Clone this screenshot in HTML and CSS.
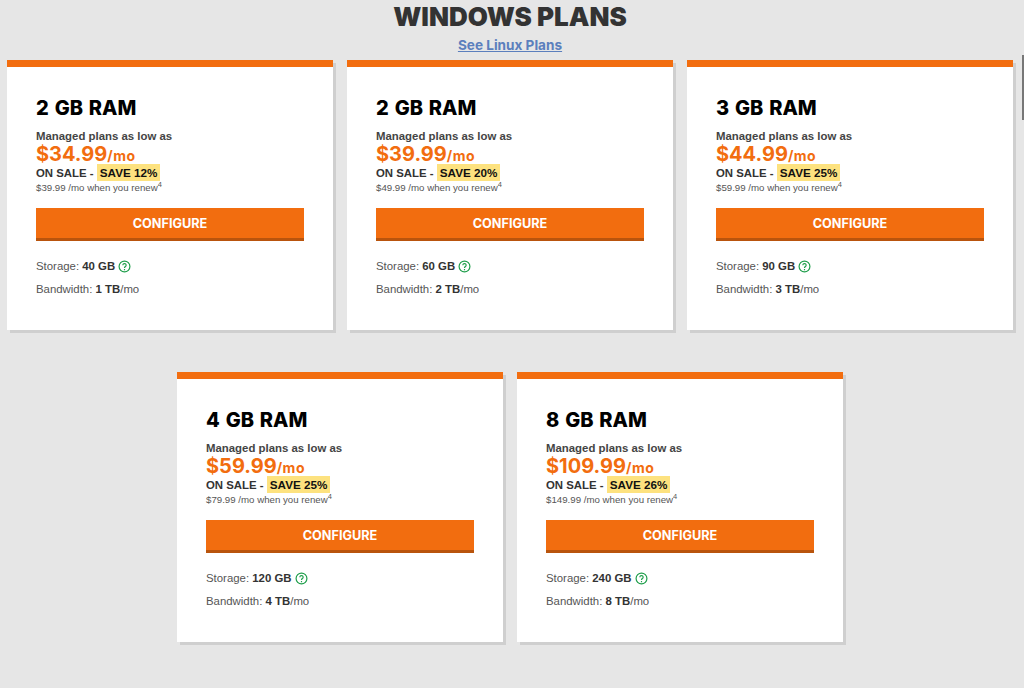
FILE: index.html
```html
<!DOCTYPE html>
<html lang="en">
<head>
<meta charset="utf-8">
<title>Windows Plans</title>
<link rel="stylesheet" href="styles.css">
</head>
<body>
<header class="head">
  <h1 class="title">WINDOWS PLANS</h1>
  <a class="switch" href="#">See Linux Plans</a>
</header>
<main class="plans">
  <article class="card">
    <h2 class="ram">2 GB RAM</h2>
    <p class="lead">Managed plans as low as</p>
    <p class="price"><span class="amount">$34.99</span><span class="per">/mo</span></p>
    <p class="sale">ON SALE - <mark class="save">SAVE 12%</mark></p>
    <p class="renew">$39.99 /mo when you renew<sup>4</sup></p>
    <a class="cta" href="#">CONFIGURE</a>
    <p class="spec">Storage: <b>40 GB</b> <svg class="help" viewBox="0 0 12 12"><circle cx="6" cy="6" r="5" /><path d="M4.5 4.8a1.5 1.5 0 1 1 2.3 1.3c-.6.4-.8.6-.8 1.2M6 8.4v1" /></svg></p>
    <p class="spec">Bandwidth: <b>1 TB</b>/mo</p>
  </article>
  <article class="card">
    <h2 class="ram">2 GB RAM</h2>
    <p class="lead">Managed plans as low as</p>
    <p class="price"><span class="amount">$39.99</span><span class="per">/mo</span></p>
    <p class="sale">ON SALE - <mark class="save">SAVE 20%</mark></p>
    <p class="renew">$49.99 /mo when you renew<sup>4</sup></p>
    <a class="cta" href="#">CONFIGURE</a>
    <p class="spec">Storage: <b>60 GB</b> <svg class="help" viewBox="0 0 12 12"><circle cx="6" cy="6" r="5" /><path d="M4.5 4.8a1.5 1.5 0 1 1 2.3 1.3c-.6.4-.8.6-.8 1.2M6 8.4v1" /></svg></p>
    <p class="spec">Bandwidth: <b>2 TB</b>/mo</p>
  </article>
  <article class="card">
    <h2 class="ram">3 GB RAM</h2>
    <p class="lead">Managed plans as low as</p>
    <p class="price"><span class="amount">$44.99</span><span class="per">/mo</span></p>
    <p class="sale">ON SALE - <mark class="save">SAVE 25%</mark></p>
    <p class="renew">$59.99 /mo when you renew<sup>4</sup></p>
    <a class="cta" href="#">CONFIGURE</a>
    <p class="spec">Storage: <b>90 GB</b> <svg class="help" viewBox="0 0 12 12"><circle cx="6" cy="6" r="5" /><path d="M4.5 4.8a1.5 1.5 0 1 1 2.3 1.3c-.6.4-.8.6-.8 1.2M6 8.4v1" /></svg></p>
    <p class="spec">Bandwidth: <b>3 TB</b>/mo</p>
  </article>
  <article class="card">
    <h2 class="ram">4 GB RAM</h2>
    <p class="lead">Managed plans as low as</p>
    <p class="price"><span class="amount">$59.99</span><span class="per">/mo</span></p>
    <p class="sale">ON SALE - <mark class="save">SAVE 25%</mark></p>
    <p class="renew">$79.99 /mo when you renew<sup>4</sup></p>
    <a class="cta" href="#">CONFIGURE</a>
    <p class="spec">Storage: <b>120 GB</b> <svg class="help" viewBox="0 0 12 12"><circle cx="6" cy="6" r="5" /><path d="M4.5 4.8a1.5 1.5 0 1 1 2.3 1.3c-.6.4-.8.6-.8 1.2M6 8.4v1" /></svg></p>
    <p class="spec">Bandwidth: <b>4 TB</b>/mo</p>
  </article>
  <article class="card">
    <h2 class="ram">8 GB RAM</h2>
    <p class="lead">Managed plans as low as</p>
    <p class="price"><span class="amount">$109.99</span><span class="per">/mo</span></p>
    <p class="sale">ON SALE - <mark class="save">SAVE 26%</mark></p>
    <p class="renew">$149.99 /mo when you renew<sup>4</sup></p>
    <a class="cta" href="#">CONFIGURE</a>
    <p class="spec">Storage: <b>240 GB</b> <svg class="help" viewBox="0 0 12 12"><circle cx="6" cy="6" r="5" /><path d="M4.5 4.8a1.5 1.5 0 1 1 2.3 1.3c-.6.4-.8.6-.8 1.2M6 8.4v1" /></svg></p>
    <p class="spec">Bandwidth: <b>8 TB</b>/mo</p>
  </article>
</main>
<div class="scrollbar"></div>
</body>
</html>
```
FILE: styles.css
```css
* { box-sizing: border-box; }
html, body { height: 100%; }
body {
  margin: 0;
  background: #e6e6e6;
  font-family: "Liberation Sans", Arial, sans-serif;
  color: #333;
  overflow: hidden;
}
p { margin: 0; }
.head {
  width: 1020px;
  text-align: center;
  height: 60px;
  padding-top: 2px;
}
.title {
  margin: 0;
  font-family: Inter, sans-serif;
  font-weight: 900;
  font-size: 26px;
  line-height: 29px;
  color: #333;
}
.switch {
  display: block;
  margin-top: 6px;
  font-family: Inter, sans-serif;
  font-weight: 700;
  font-size: 13.6px;
  line-height: 16px;
  color: #5b7fbd;
  text-decoration: underline;
}
.plans {
  width: 1020px;
  display: flex;
  flex-wrap: wrap;
  justify-content: center;
  gap: 42px 14px;
}
.card {
  width: 326px;
  height: 270px;
  background: #fff;
  border-top: 7px solid #f26d0f;
  padding: 30px 29px 0;
  box-shadow: 3px 3px 0 #cfcfcf;
}
.ram {
  margin: 0;
  font-family: Inter, sans-serif;
  font-weight: 800;
  font-size: 20px;
  line-height: 23px;
  word-spacing: 1.5px;
  color: #000;
}
.lead {
  margin-top: 9px;
  font-size: 11.4px;
  line-height: 14px;
  font-weight: 700;
  color: #444;
}
.price {
  margin-top: 1px;
  height: 20px;
  line-height: 20px;
  color: #f26d0f;
  font-family: Inter, sans-serif;
  font-weight: 700;
}
.amount { font-size: 20px; }
.per { font-size: 14px; letter-spacing: 0.5px; }
.sale {
  margin-top: 2px;
  font-size: 11.4px;
  line-height: 14px;
  font-weight: 700;
  color: #333;
}
.save {
  background: #fde27f;
  color: #111;
  padding: 2px 3px;
  font-size: 11.7px;
}
.renew {
  margin-top: 1px;
  font-size: 9.7px;
  line-height: 14px;
  color: #555;
}
.renew sup {
  font-size: 7.5px;
  line-height: 0;
}
.cta {
  display: block;
  margin-top: 13px;
  height: 33px;
  background: #f26d0f;
  border-bottom: 3px solid #b9540d;
  color: #fff;
  font-family: Inter, sans-serif;
  font-weight: 700;
  font-size: 12.7px;
  line-height: 32px;
  text-align: center;
  text-decoration: none;
}
.spec {
  font-size: 11.4px;
  line-height: 14px;
  color: #555;
  margin-top: 9px;
}
.cta + .spec { margin-top: 18px; }
.spec b { color: #333; }
.help {
  width: 13px;
  height: 13px;
  vertical-align: -3px;
  fill: none;
  stroke: #1e9e4a;
  stroke-width: 1.1;
}
.scrollbar {
  position: absolute;
  top: 55px;
  right: 0;
  width: 2px;
  height: 65px;
  background: #777;
}
```
